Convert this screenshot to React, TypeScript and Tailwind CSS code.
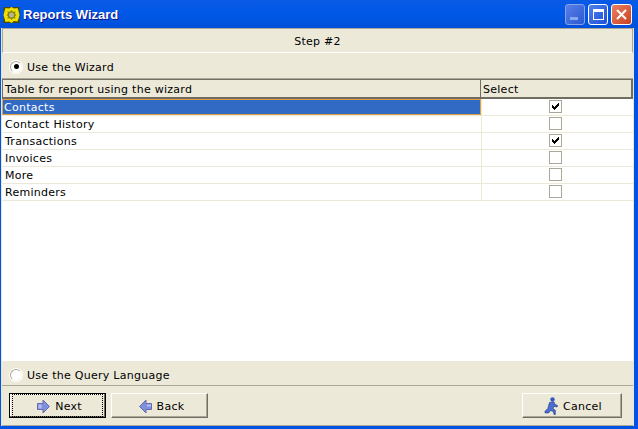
const rows = [
  { name: "Contacts", checked: true, active: true },
  { name: "Contact History", checked: false },
  { name: "Transactions", checked: true },
  { name: "Invoices", checked: false },
  { name: "More", checked: false },
  { name: "Reminders", checked: false },
];

function Radio({ on }: { on?: boolean }) {
  return (
    <span className="flex h-3 w-3 items-center justify-center rounded-full border border-[#aca899] border-r-[#f4f2e8] border-b-[#f4f2e8] bg-white shadow-[0_0_0_1px_#fff]">
      {on && <span className="h-[5px] w-[5px] rounded-full bg-black" />}
    </span>
  );
}

function Check() {
  return (
    <svg width="7" height="7" viewBox="0 0 7 7" shapeRendering="crispEdges">
      <path d="M6 0h1v3h-1v1h-1v1h-1v1h-1v1h-1v-1h-1v-1h-1v-3h1v1h1v1h1v-1h1v-1h1v-1h1z" fill="#000" />
    </svg>
  );
}

function ArrowRight() {
  return (
    <svg width="13" height="15" viewBox="0 0 13 15">
      <path d="M.5 4.500h5.500V1l6.500 6.500L6 14v-3.500H.5z" fill="#7f8fe0" stroke="#6a6aa8" strokeWidth="1" />
      <path d="M1.500 5.500h3v4h-3z" fill="#b4bef2" />
    </svg>
  );
}

function ArrowLeft() {
  return (
    <svg width="13" height="15" viewBox="0 0 13 15">
      <path d="M12.500 4.500H7V1L.5 7.500 7 14v-3.500h5.500z" fill="#7f8fe0" stroke="#6a6aa8" strokeWidth="1" />
      <path d="M8 5.500h4v2H8z" fill="#b4bef2" />
    </svg>
  );
}

function Runner() {
  return (
    <svg width="14" height="18" viewBox="0 0 14 18">
      <circle cx="8.500" cy="2.500" r="2.200" fill="#3458c0" />
      <path d="M5.500 5.500l4.500-.5 1 2.500 2.500 1-.5 1.500-3-.8-1 2.600 2.300 1.400v4.300H10l-.7-3-2.800-1-1.800 2.400H1v-1.600l2.800-2.800z" fill="#4a70d8" stroke="#1c2f70" strokeWidth=".6" />
    </svg>
  );
}

function Logo() {
  return (
    <svg width="17" height="16" viewBox="0 0 16 16">
      <rect width="16" height="16" fill="#4a4a08" />
      <path d="M8 0l2.500 1.500L14 1l1 3 1 4-1 3.500-1 3-3.500-.5L8 16l-2.500-1.500L2 15l-1-3.500L0 8l1-4 1-3 3.500.5z" fill="#eee000" />
      <path d="M8 3l1.500 1.800L12 4.500l-.5 2.500L13 8l-1.500 1.200.5 2.300-2.500-.3L8 13l-1.500-1.800-2.500.3.500-2.300L3 8l1.500-1L4 4.500l2.500.3z" fill="#8a8410" />
      <circle cx="8" cy="8" r="2.500" fill="#b8b690" />
    </svg>
  );
}

function Btn({ children, focused, wide }: { children: React.ReactNode; focused?: boolean; wide?: boolean }) {
  return (
    <button
      type="button"
      className={`flex h-[25px] items-center justify-center border bg-[#ece9d8] ${wide ? "w-[100px]" : "w-[97px]"} ${
        focused
          ? "border-black shadow-[inset_-1px_-1px_0_#716f64,inset_1px_1px_0_#fff]"
          : "border-white border-r-[#716f64] border-b-[#716f64] shadow-[inset_-1px_-1px_0_#aca899]"
      }`}
    >
      <span className={`flex h-full w-full items-center justify-center gap-[5px] pt-[1px] ${wide ? "pl-[2px]" : "pl-[4px]"} ${focused ? "m-[2px] border border-dotted border-black" : ""}`}>
        {children}
      </span>
    </button>
  );
}

export default function App() {
  return (
    <div className="flex h-[429px] w-[638px] flex-col overflow-hidden bg-[#0054e3] font-['DejaVu_Sans',sans-serif] text-[11px] leading-none tracking-[0.27px] text-black">
      {/* title bar */}
      <div className="flex h-[28px] shrink-0 items-center bg-gradient-to-b from-[#0a5ae6] via-[#0058e6] to-[#0050d8] pl-[3px] pr-[6px] pt-[1px]">
        <Logo />
        <span className="ml-[3px] font-['Liberation_Sans',sans-serif] text-[13px] font-bold tracking-normal text-white [text-shadow:1px_1px_0_#0f1089]">
          Reports Wizard
        </span>
        <div className="ml-auto flex gap-[3px] self-start pt-[3px]">
          <div className="flex h-[21px] w-[20px] items-end rounded-[3px] border border-[#8aa0e8] bg-gradient-to-br from-[#5a80e8] to-[#2a58d0] pb-[4px] pl-[4px]">
            <span className="h-[3px] w-[8px] bg-[#88a8ee]" />
          </div>
          <div className="flex h-[21px] w-[20px] items-center justify-center rounded-[3px] border border-white bg-gradient-to-br from-[#5080ec] to-[#2050d8]">
            <span className="h-[11px] w-[11px] border border-t-[3px] border-white" />
          </div>
          <div className="flex h-[21px] w-[21px] items-center justify-center rounded-[3px] border border-white bg-gradient-to-br from-[#e88060] to-[#c84020]">
            <svg width="11" height="11" viewBox="0 0 11 11">
              <path d="M1 1l9 9M10 1l-9 9" stroke="#fff" strokeWidth="2" />
            </svg>
          </div>
        </div>
      </div>

      {/* window body */}
      <div className="ml-[1px] mr-[4px] mb-[3px] flex min-h-0 flex-1 flex-col border-x border-[#e8e5d4] bg-[#ece9d8]">
        <div className="flex h-[25px] shrink-0 items-center justify-center border border-[#aca899] border-b-white border-t-[#aca899] pt-[1px]">
          Step #2
        </div>
        <div className="flex h-[26px] shrink-0 items-center gap-[5px] border-b border-[#aca899] pl-[8px] pt-[2px]">
          <Radio on />
          <span className="pt-[2px]">Use the Wizard</span>
        </div>

        {/* table */}
        <div className="flex min-h-0 flex-1 flex-col bg-white">
          <div className="flex h-[20px] shrink-0 border-b-2 border-[#6f6d62] bg-[#ece9d8]">
            <div className="flex w-[479px] items-center border-x border-t border-[#716f64] pl-[2px] pt-[1px]">Table for report using the wizard</div>
            <div className="flex w-[152px] items-center border-r-2 border-t border-[#716f64] pl-[2px] pt-[1px]">Select</div>
          </div>
          {rows.map((row) => (
            <div key={row.name} className="flex h-[17px] shrink-0 border-b border-[#ece9d8]">
              <div
                className={`flex w-[479px] items-center ${
                  row.active ? "border border-[#e0a040] bg-[#316ac5] pl-[1px] text-white" : "pl-[3px]"
                }`}
              >
                {row.name}
              </div>
              <div className="flex w-[152px] items-center justify-center border-l border-[#ece9d8] pr-[5px] pb-[1px]">
                <span className="flex h-[13px] w-[13px] items-center justify-center border border-[#aca899] bg-white">
                  {row.checked && <Check />}
                </span>
              </div>
            </div>
          ))}
        </div>

        <div className="flex h-[26px] shrink-0 items-center gap-[5px] border-b border-[#aca899] border-t border-t-white pl-[8px] pt-[3px]">
          <Radio />
          <span className="pt-[1px]">Use the Query Language</span>
        </div>

        {/* buttons */}
        <div className="flex h-[40px] shrink-0 items-center gap-[5px] border-b border-[#aca899] pl-[7px] pr-[11px]">
          <Btn focused>
            <ArrowRight />
            <span>Next</span>
          </Btn>
          <Btn>
            <ArrowLeft />
            <span>Back</span>
          </Btn>
          <div className="ml-auto">
            <Btn wide>
              <Runner />
              <span>Cancel</span>
            </Btn>
          </div>
        </div>
      </div>
    </div>
  );
}
